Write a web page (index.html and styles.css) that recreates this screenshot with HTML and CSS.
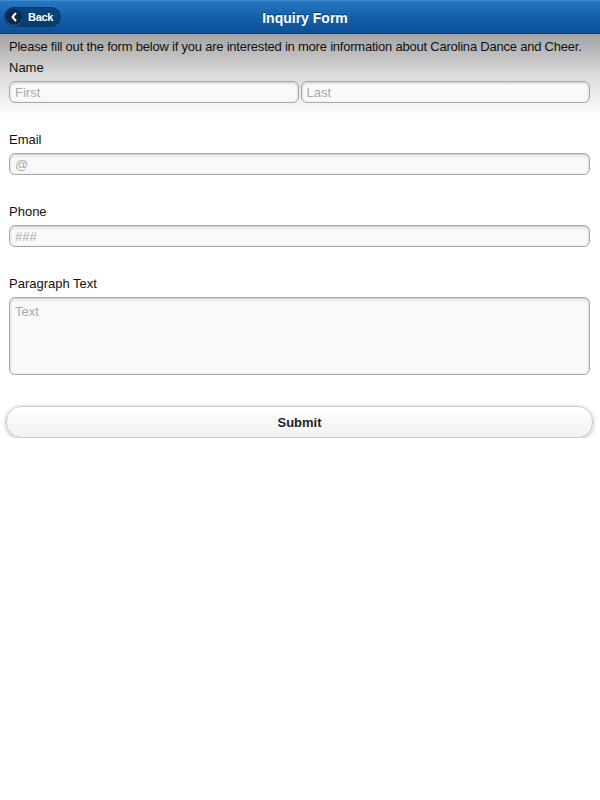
FILE: index.html
```html
<!DOCTYPE html>
<html lang="en">
<head>
    <meta charset="UTF-8">
    <meta name="viewport" content="width=device-width, initial-scale=1.0">
    <title>Inquiry Form</title>
    <link rel="stylesheet" href="styles.css">
</head>
<body>
    <div class="header">
        <a href="#" class="back-btn">
            <span class="back-icon">
                <svg width="8" height="10" viewBox="0 0 8 10"><path d="M5.5 1.5 L2.5 5 L5.5 8.5" fill="none" stroke="#fff" stroke-width="2" stroke-linecap="round" stroke-linejoin="round"/></svg>
            </span>
            Back
        </a>
        <h1>Inquiry Form</h1>
        <span></span>
    </div>

    <form class="content">
        <p class="intro">Please fill out the form below if you are interested in more information about Carolina Dance and Cheer.</p>

        <div class="field">
            <label>Name</label>
            <div class="name-row">
                <input type="text" class="input" placeholder="First">
                <input type="text" class="input" placeholder="Last">
            </div>
        </div>

        <div class="field">
            <label>Email</label>
            <input type="email" class="input" placeholder="@">
        </div>

        <div class="field">
            <label>Phone</label>
            <input type="tel" class="input" placeholder="###">
        </div>

        <div class="field">
            <label>Paragraph Text</label>
            <textarea class="input textarea" placeholder="Text"></textarea>
        </div>

        <button type="button" class="submit-btn">Submit</button>
    </form>
</body>
</html>
```

FILE: styles.css
```css
* {
    box-sizing: border-box;
    margin: 0;
    padding: 0;
}

body {
    font-family: "Liberation Sans", Arial, sans-serif;
    font-size: 13px;
    color: #111;
    background: #fff;
}

.header {
    height: 34px;
    display: grid;
    grid-template-columns: 1fr auto 1fr;
    align-items: center;
    padding: 0 4px;
    background: linear-gradient(#2a77c1, #1463ad 45%, #0a4f97);
    border-top: 1px solid #3d8ad0;
    border-bottom: 1px solid #083f7a;
}

.header h1 {
    font-size: 14px;
    font-weight: bold;
    color: #fff;
    text-shadow: 0 -1px 0 #0a3a6e;
    padding: 1px 0 0 10px;
}

.back-btn {
    justify-self: start;
    display: flex;
    align-items: center;
    gap: 6px;
    height: 20px;
    width: 57px;
    padding-left: 2px;
    border-radius: 10px;
    background: linear-gradient(#0d4680, #093a6b);
    box-shadow: inset 0 1px 1px rgba(0, 0, 0, 0.25);
    color: #fff;
    font-size: 11px;
    font-weight: bold;
    letter-spacing: -0.3px;
    text-decoration: none;
}

.back-icon {
    width: 16px;
    height: 16px;
    border-radius: 50%;
    background: #0a2b4f;
    box-shadow: 0 1px 0 rgba(255, 255, 255, 0.2);
    display: flex;
    align-items: center;
    justify-content: center;
}

.content {
    display: block;
    padding: 5px 10px 0 9px;
    background: linear-gradient(#a3a3a3 0px, #d9d9d9 40px, #ffffff 82px);
    background-repeat: no-repeat;
}

.intro {
    line-height: 16px;
    margin-bottom: 5px;
    white-space: nowrap;
    letter-spacing: -0.22px;
}

.field {
    margin-bottom: 29px;
}

.field label {
    display: block;
    line-height: 16px;
    margin-bottom: 5px;
}

.name-row {
    display: flex;
    gap: 2px;
}

.input {
    display: block;
    width: 100%;
    height: 22px;
    padding: 0 5px;
    border: 1px solid #a8a8a8;
    border-radius: 6px;
    background: #f9f9f9;
    box-shadow: inset 0 1px 3px rgba(0, 0, 0, 0.2);
    font-family: inherit;
    font-size: 13px;
    color: #222;
    outline: none;
}

.input::placeholder {
    color: #aaa;
}

.textarea {
    height: 78px;
    padding-top: 6px;
    resize: none;
}

.submit-btn {
    display: block;
    width: calc(100% + 6px);
    height: 32px;
    margin: 31px -3px 0 -3px;
    border: 1px solid #ccc;
    border-radius: 15px;
    background: linear-gradient(#ffffff, #f1f1f1);
    box-shadow: 0 1px 4px rgba(0, 0, 0, 0.3);
    font-family: inherit;
    font-size: 13px;
    font-weight: bold;
    color: #222;
    text-shadow: 0 1px 0 #fff;
    cursor: pointer;
}
```
